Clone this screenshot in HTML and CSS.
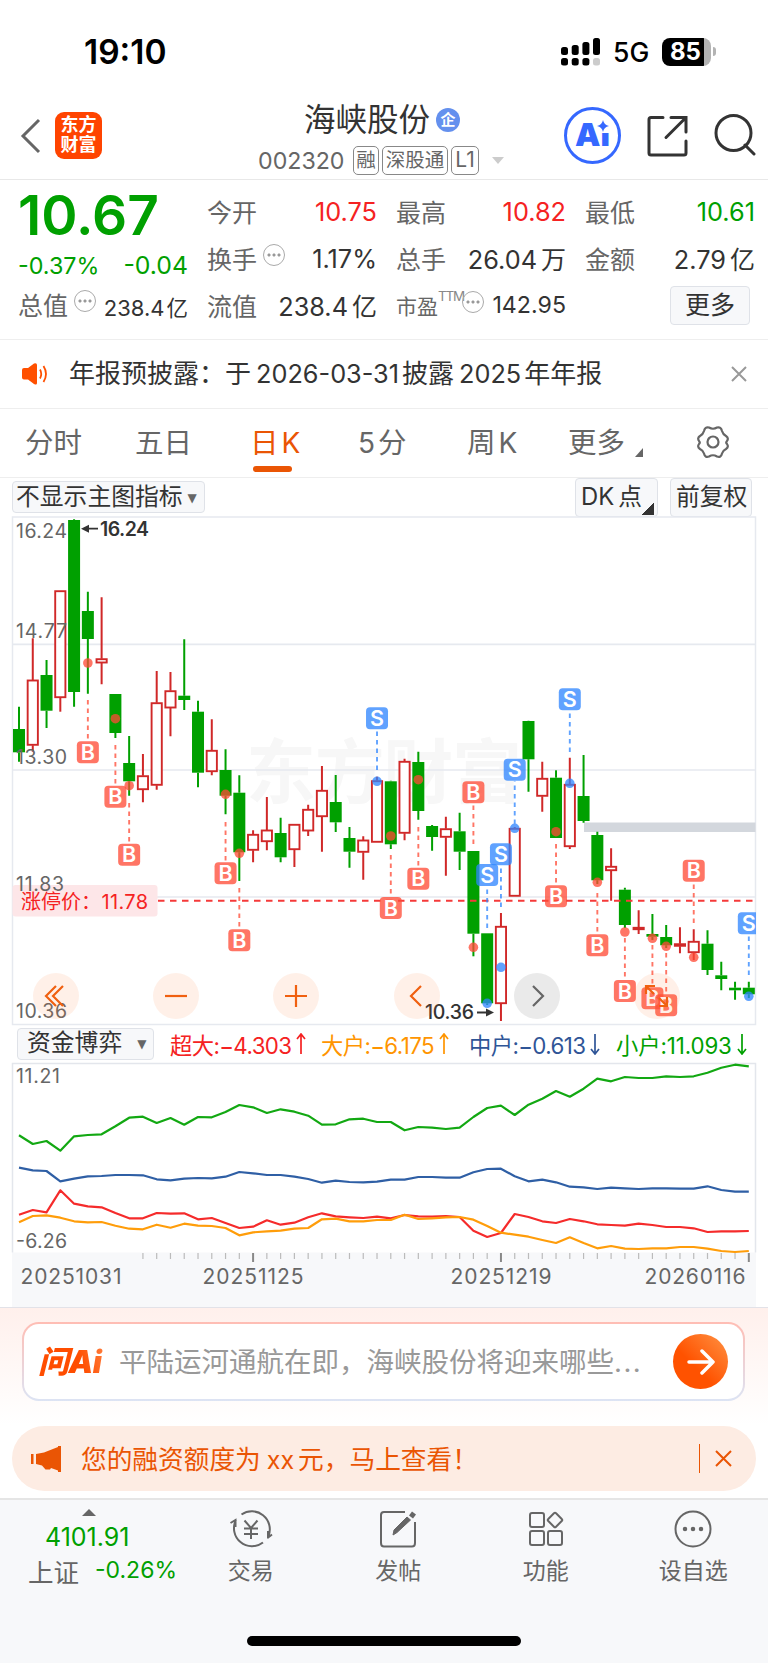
FILE: index.html
```html
<!DOCTYPE html>
<html lang="zh-CN">
<head>
    <meta charset="UTF-8">
    <title>海峡股份 002320</title>
    <link rel="stylesheet" href="styles.css">
</head>
<body>
    <div class="status-bar">
        <span class="time">19:10</span>
        <svg class="signal" width="40" height="28" viewBox="0 0 40 28">
            <rect x="0" y="9" width="7" height="8" rx="2.5"/>
            <rect x="10.7" y="7" width="7" height="10" rx="2.5"/>
            <rect x="21.4" y="4" width="7" height="13" rx="2.5"/>
            <rect x="32" y="0" width="7" height="17" rx="2.5"/>
            <rect x="0" y="20" width="7" height="7.5" rx="2.5"/>
            <rect x="10.7" y="20" width="7" height="7.5" rx="2.5"/>
            <rect x="21.4" y="20" width="7" height="7.5" rx="2.5"/>
            <rect x="32" y="20" width="7" height="7.5" rx="2.5" fill="#ccc"/>
        </svg>
        <span class="network">5G</span>
        <span class="battery">85</span>
        <span class="battery-tip"></span>
    </div>

    <header class="header">
        <svg class="back" width="22" height="36" viewBox="0 0 22 36"><path d="M19 2 L3 18 L19 34"/></svg>
        <div class="logo">东方<br>财富</div>
        <div class="stock">
            <div class="stock-name">海峡股份<span class="badge">企</span></div>
            <div class="stock-code">
                <span class="code">002320</span>
                <span class="tag">融</span>
                <span class="tag tag-wide">深股通</span>
                <span class="tag tag-level">L1</span>
                <span class="arrow-down"></span>
            </div>
        </div>
        <div class="ai-icon">Ai<svg width="14" height="14" viewBox="0 0 14 14"><path d="M7 1 Q8 6 13 7 Q8 8 7 13 Q6 8 1 7 Q6 6 7 1Z"/></svg></div>
        <svg class="share" width="42" height="42" viewBox="0 0 42 42">
            <path d="M16 2.500 H4 Q2 2.500 2 4.500 V38 Q2 40 4 40 H37 Q39 40 39 38 V26 M24 2.500 H39 V17 M38 3.500 L19 22.500"/>
        </svg>
        <svg class="search" width="42" height="42" viewBox="0 0 42 42"><circle cx="19.500" cy="19" r="17.500"/><path d="M31 31 L40 40"/></svg>
    </header>

    <section class="quote">
        <div class="price-col">
            <div class="price">10.67</div>
            <div class="change"><span>-0.37%</span><span class="diff">-0.04</span></div>
            <div class="cell small"><label>总值</label><i class="tip"></i><b>238.4<em>亿</em></b></div>
        </div>
        <div class="quote-grid">
            <div class="cell"><label>今开</label><b class="red">10.75</b></div>
            <div class="cell"><label>最高</label><b class="red">10.82</b></div>
            <div class="cell"><label>最低</label><b class="green">10.61</b></div>
            <div class="cell"><label>换手</label><i class="tip"></i><b>1.17%</b></div>
            <div class="cell"><label>总手</label><b>26.04<em>万</em></b></div>
            <div class="cell"><label>金额</label><b>2.79<em>亿</em></b></div>
            <div class="cell"><label>流值</label><b>238.4<em>亿</em></b></div>
            <div class="cell pe"><label>市盈</label><sup>TTM</sup><i class="tip"></i><b>142.95</b></div>
            <div class="cell"><button class="more-btn">更多</button></div>
        </div>
    </section>

    <div class="notice">
        <svg width="26" height="22" viewBox="0 0 26 22">
            <path d="M0 7 Q0 5 2 5 H6 L12 .5 Q15 -.5 15 2 V20 Q15 22.500 12 21 L6 16.500 H2 Q0 16.500 0 14.500Z" fill="#ff5000"/>
            <path d="M18 6.500 Q20.500 11 18 15.500 M21.500 3 Q26.500 11 21.500 19" fill="none" stroke="#ff5000" stroke-width="1.800"/>
        </svg>
        <span class="notice-text">年报预披露：于<u>2026-03-31</u>披露<u>2025</u>年年报</span>
        <svg class="close" width="16" height="16" viewBox="0 0 16 16"><path d="M1 1 L15 15 M15 1 L1 15"/></svg>
    </div>

    <nav class="tabs">
        <span class="tab">分时</span>
        <span class="tab">五日</span>
        <span class="tab active">日<u>K</u></span>
        <span class="tab"><u>5</u>分</span>
        <span class="tab">周<u>K</u></span>
        <span class="tab tab-more">更多</span>
        <svg class="gear" width="34" height="34" viewBox="0 0 34 34">
            <path d="M13 2.500 Q17 5 21 2.500 Q25 1.500 26 6 Q27 9.500 30 11 Q33 13 31 16 Q29.500 17.500 31 19 Q33 22 30 24 Q27 25.500 26 28.500 Q25 33 21 31.500 Q17 29 13 31.500 Q9 33 8 28.500 Q7 25.500 4 24 Q1 22 3 19 Q4.500 17.500 3 16 Q1 13 4 11 Q7 9.500 8 6 Q9 1.500 13 2.500Z"/>
            <circle cx="17" cy="17" r="5.500"/>
        </svg>
    </nav>

    <div class="chart-options">
        <button class="option option-main">不显示主图指标<small>▼</small></button>
        <button class="option option-dk">DK<em>点</em></button>
        <button class="option option-fq">前复权</button>
    </div>

    <div class="k-chart">
        <!-- Le graphique K est dessiné par script.js -->
        <svg id="k-svg" width="768" height="510" viewBox="0 516 768 510"></svg>
        <div class="chart-controls">
            <span class="ctrl"><svg viewBox="0 0 46 46"><path d="M23 13 L13 23 L23 33 M30 13 L20 23 L30 33"/></svg></span>
            <span class="ctrl"><svg viewBox="0 0 46 46"><path d="M12 23 H34"/></svg></span>
            <span class="ctrl"><svg viewBox="0 0 46 46"><path d="M12 23 H34 M23 12 V34"/></svg></span>
            <span class="ctrl"><svg viewBox="0 0 46 46"><path d="M27 13 L17 23 L27 33"/></svg></span>
            <span class="ctrl ctrl-gray"><svg viewBox="0 0 46 46"><path d="M19 13 L29 23 L19 33"/></svg></span>
            <span class="ctrl"><svg viewBox="0 0 46 46"><path d="M20 21 L12 13 M12 21 V13 H21 M25 25 L33 33 M33 24 V33 H25"/></svg></span>
        </div>
    </div>

    <div class="fund-bar">
        <button class="option option-fund">资金博弈<small>▼</small></button>
        <span class="fund red">超大:−4.303<svg viewBox="0 0 10 22"><path d="M5 1V21M1 6L5 1L9 6"/></svg></span>
        <span class="fund orange">大户:−6.175<svg viewBox="0 0 10 22"><path d="M5 1V21M1 6L5 1L9 6"/></svg></span>
        <span class="fund blue">中户:−0.613<svg viewBox="0 0 10 22"><path d="M5 1V21M1 16L5 21L9 16"/></svg></span>
        <span class="fund green">小户:11.093<svg viewBox="0 0 10 22"><path d="M5 1V21M1 16L5 21L9 16"/></svg></span>
    </div>

    <svg id="fund-svg" width="768" height="245" viewBox="0 1062 768 245"></svg>

    <section class="ask">
        <div class="ask-box">
            <span class="ask-logo">问Ai</span>
            <span class="ask-text">平陆运河通航在即，海峡股份将迎来哪些<u>...</u></span>
            <span class="ask-go"><svg width="28" height="26" viewBox="0 0 28 26"><path d="M2 13 H26 M15 2 L26 13 L15 24"/></svg></span>
        </div>
    </section>

    <div class="promo">
        <svg width="31" height="28" viewBox="0 0 31 28"><path d="M0 9 H2.500 V19 H0Z M5 9 L13 7.500 L27 2 V1 H30 V27 H27 V25.500 L20 23 L19 24.500 H14.500 L11 20.500 L5 19Z" fill="#ea5504"/></svg>
        <span class="promo-text">您的融资额度为<u>xx</u>元，马上查看！</span>
        <span class="promo-line"></span>
        <svg class="close" width="17" height="17" viewBox="0 0 17 17"><path d="M1 1 L16 16 M16 1 L1 16"/></svg>
    </div>

    <footer class="bottom-nav">
        <div class="index">
            <span class="arrow-up"></span>
            <div class="index-value">4101.91</div>
            <div class="index-row"><label>上证</label><span>-0.26%</span></div>
        </div>
        <div class="nav-item">
            <svg width="44" height="40" viewBox="0 0 44 40">
                <path d="M12.500 5.500 A18 18 0 0 1 39.500 27 M38.500 29 L43 25.500 M39 22 V29.500 M34 33.500 A18 18 0 0 1 7 11 M1.500 14 L6.500 11 V18"/>
                <path d="M15.500 11.500 L22 19 L28.500 11.500 M22 19 V30 M15 19.500 H29 M15 25 H29"/>
            </svg>
            <span>交易</span>
        </div>
        <div class="nav-item">
            <svg width="44" height="40" viewBox="0 0 44 40">
                <path d="M29 3 H8 Q5 3 5 6 V34 Q5 37.500 8 37.500 H36 Q39 37.500 39 34 V13"/>
                <path d="M35 8 L38 4" stroke-width="5"/>
                <path d="M17 26 L18 21 L31 8 L34.500 11 L21 23.500Z" fill="#666" stroke-width="1"/>
            </svg>
            <span>发帖</span>
        </div>
        <div class="nav-item">
            <svg width="44" height="40" viewBox="0 0 44 40">
                <rect x="6" y="4" width="14" height="14" rx="2"/>
                <rect x="6" y="22" width="14" height="14" rx="2"/>
                <rect x="24" y="22" width="14" height="14" rx="2"/>
                <rect x="25.500" y="5.500" width="11" height="11" rx="1.500" transform="rotate(45 31 11)"/>
            </svg>
            <span>功能</span>
        </div>
        <div class="nav-item">
            <svg width="44" height="40" viewBox="0 0 44 40">
                <circle cx="22" cy="20" r="17.500"/>
                <path d="M14 20h.01M22 20h.01M30 20h.01" stroke-width="4.500" stroke-linecap="round"/>
            </svg>
            <span>设自选</span>
        </div>
    </footer>
    <div class="home"><span></span></div>

    <script src="script.js"></script>
</body>
</html>
```
FILE: styles.css
```css
* {
    box-sizing: border-box;
}
body {
    margin: 0;
    width: 768px;
    background: #fff;
    color: #333;
    font-family: Inter, "Noto Sans CJK SC", sans-serif;
}
em, i, b {
    font-style: normal;
    font-weight: normal;
}
u {
    text-decoration: none;
}
button {
    font-family: inherit;
    color: #333;
    background: #f7f8fa;
    border: 1.5px solid #dfe2e8;
    border-radius: 4px;
    padding: 0;
    white-space: nowrap;
}
.red { color: #f52222; }
.green { color: #00a000; }
.orange { color: #ff9500; }
.blue { color: #2f5597; }

/* status bar */
.status-bar {
    display: flex;
    align-items: center;
    height: 95px;
    padding: 8px 52px 0 84px;
    color: #000;
}
.time {
    font-size: 33.5px;
    font-weight: 600;
    flex: 1;
}
.network {
    font-size: 26.5px;
    font-weight: 500;
    margin: 0 14px 0 12px;
    width: 35px;
}
.battery {
    width: 49px;
    height: 28px;
    border-radius: 8px;
    background: linear-gradient(to right, #000 42px, #b3b3b3 42px);
    color: #fff;
    font-size: 24px;
    font-weight: 700;
    line-height: 28px;
    padding-left: 8px;
}
.battery-tip {
    width: 3px;
    height: 9px;
    margin-left: 2px;
    border-radius: 0 4px 4px 0;
    background: #b3b3b3;
}

/* header */
.header {
    display: flex;
    height: 85px;
    border-bottom: 1.5px solid #e8e8e8;
}
.back {
    margin: 23px 0 0 20px;
    fill: none;
    stroke: #666;
    stroke-width: 3;
}
.logo {
    width: 47px;
    height: 47px;
    margin: 17px 0 0 13px;
    padding-top: 3px;
    border-radius: 9px;
    background: #ff4400;
    color: #fff;
    font-size: 18px;
    font-weight: 700;
    line-height: 20px;
    text-align: center;
}
.stock {
    margin-left: 156px;
    width: 260px;
}
.stock-name {
    display: flex;
    align-items: center;
    margin: 7px 0 0 46px;
    font-size: 31.5px;
    line-height: 34px;
    height: 36px;
}
.badge {
    width: 24px;
    height: 24px;
    margin-left: 6px;
    border-radius: 50%;
    background: #6490ee;
    color: #fff;
    font-size: 15px;
    font-weight: 700;
    line-height: 23px;
    text-align: center;
}
.stock-code {
    display: flex;
    align-items: center;
    margin-top: 8px;
    height: 29px;
    color: #666;
}
.code {
    width: 87px;
    margin-right: 8px;
    font-size: 23.2px;
}
.tag {
    width: 26px;
    height: 29px;
    margin-right: 3px;
    border: 1.5px solid #888;
    border-radius: 5px;
    font-size: 19.5px;
    line-height: 26px;
    text-align: center;
}
.tag-wide {
    width: 66px;
}
.tag-level {
    width: 28px;
    font-size: 21px;
}
.arrow-down {
    margin-left: 10px;
    border: 6.5px solid transparent;
    border-top: 7px solid #ccc;
    border-bottom: 0;
}
.ai-icon {
    position: relative;
    width: 57px;
    height: 57px;
    margin: 12px 0 0 46px;
    border: 3px solid #3568ff;
    border-radius: 50%;
    color: #3568ff;
    font-size: 32px;
    font-weight: 900;
    line-height: 50px;
    text-align: center;
}
.ai-icon svg {
    position: absolute;
    right: 8px;
    top: 9px;
    fill: #3568ff;
    background: #fff;
}
.share, .search {
    margin: 20px 0 0 26px;
    fill: none;
    stroke: #333;
    stroke-width: 3;
    stroke-linecap: round;
}
.search {
    margin: 19px 0 0 25px;
}

/* quote */
.quote {
    display: flex;
    height: 160px;
    padding: 9px 12px 0 18px;
    border-bottom: 1.5px solid #eee;
}
.price-col {
    width: 170px;
}
.price {
    height: 53px;
    color: #00a000;
    font-size: 55px;
    font-weight: 600;
    line-height: 53px;
}
.change {
    display: flex;
    justify-content: space-between;
    height: 40px;
    line-height: 47px;
    color: #00a000;
    font-size: 23.3px;
}
.diff {
    font-size: 24.8px;
}
.quote-grid {
    display: grid;
    grid-template-columns: repeat(3, 170px);
    grid-auto-rows: 47px;
    column-gap: 19px;
    margin-left: 19px;
}
.cell {
    display: flex;
    align-items: center;
    height: 44px;
    white-space: nowrap;
}
.cell label {
    color: #666;
    font-size: 25px;
}
.cell b {
    margin-left: auto;
    font-size: 25.3px;
}
.cell em {
    margin-left: 4px;
    font-size: 25px;
}
.small b {
    font-size: 22px;
    padding-top: 4px;
}
.small em {
    margin-left: 2px;
    font-size: 21.5px;
}
.tip {
    width: 22px;
    height: 22px;
    margin: 0 0 7px 6px;
    flex-shrink: 0;
    border: 1.7px solid #aaa;
    border-radius: 50%;
    background:
        radial-gradient(circle, #999 1.3px, transparent 1.8px) -5px 0 no-repeat,
        radial-gradient(circle, #999 1.3px, transparent 1.8px) 0 0 no-repeat,
        radial-gradient(circle, #999 1.3px, transparent 1.8px) 5px 0 no-repeat;
}
.pe label {
    font-size: 21px;
}
.pe sup {
    font-size: 13.5px;
    width: 24px;
    letter-spacing: -1.2px;
    color: #888;
    height: 34px;
}
.pe .tip {
    margin-left: 0;
}
.pe b {
    font-size: 23.2px;
}
.more-btn {
    width: 80px;
    height: 39px;
    margin-left: auto;
    margin-right: 5px;
    font-size: 25px;
    line-height: 34px;
}

/* notice */
.notice {
    display: flex;
    align-items: center;
    height: 69px;
    padding: 0 21px 0 22px;
    border-bottom: 1.5px solid #eee;
}
.notice-text {
    flex: 1;
    margin: -5px 0 0 21px;
    font-size: 26px;
}
.notice-text u {
    margin: 0 3px 0 5px;
    font-size: 25.3px;
}
.close {
    fill: none;
    stroke: #999;
    stroke-width: 2;
}

/* tabs */
.tabs {
    display: flex;
    align-items: center;
    height: 69px;
    padding-left: 25px;
    border-bottom: 1.5px solid #eee;
    color: #666;
    font-size: 28.5px;
}
.tab {
    position: relative;
    width: 57px;
    margin-top: -6px;
    margin-right: 53px;
    white-space: nowrap;
}
.tab:nth-child(3) { margin-left: 5px; }
.tab:nth-child(4) { margin-left: -5px; }
.tab:nth-child(5) { margin-left: 2px; }
.tab:nth-child(6) { margin-left: -9px; }
.tab u {
    font-size: 28px;
    margin: 0 3px;
}
.active {
    color: #ea5504;
}
.active::after {
    content: "";
    position: absolute;
    left: 3px;
    bottom: -11px;
    width: 39px;
    height: 6px;
    border-radius: 3px;
    background: #ea5504;
}
.tab-more::after {
    content: "";
    position: absolute;
    left: 67px;
    bottom: 4px;
    border-left: 8px solid transparent;
    border-bottom: 9px solid #666;
}
.gear {
    margin: -2px 0 0 18px;
    fill: none;
    stroke: #666;
    stroke-width: 2.2;
}

/* chart */
.chart-options {
    display: flex;
    align-items: center;
    height: 38px;
    padding: 0 16px 0 12px;
}
.option {
    height: 32px;
    flex-shrink: 0;
    font-size: 23.8px;
    line-height: 28px;
    text-align: left;
}
.option small {
    font-family: "DejaVu Sans", sans-serif;
    font-size: 12px;
    color: #666;
    vertical-align: 3px;
    margin-left: 5px;
}
.option-main {
    width: 193px;
    padding-left: 3px;
    margin-right: auto;
}
.option-dk, .option-fq {
    height: 39px;
    padding-left: 5px;
}
.option-dk {
    width: 83px;
    margin-right: 12px;
    background: linear-gradient(135deg, transparent 50%, #333 50%) 66px 24px / 12px 12px no-repeat #f7f8fa;
}
.option-dk em {
    margin-left: 4px;
}
.option-fq {
    width: 82px;
}
.k-chart {
    position: relative;
    height: 510px;
}
.k-chart svg, #fund-svg {
    display: block;
}
.chart-controls {
    position: absolute;
    left: 33px;
    bottom: 7px;
    width: 647px;
    display: flex;
    justify-content: space-between;
}
.ctrl {
    width: 46px;
    height: 46px;
    border-radius: 50%;
    background: rgba(255, 120, 50, .11);
}
.ctrl svg {
    fill: none;
    stroke: #f06010;
    stroke-width: 2.2;
}
.ctrl-gray {
    background: #eaeaea;
}
.ctrl-gray svg {
    stroke: #666;
}

/* funds */
.fund-bar {
    display: flex;
    align-items: center;
    height: 36px;
    padding: 0 12px 1px 17px;
}
.option-fund {
    width: 137px;
    margin-right: 16px;
    padding-left: 9px;
}
.option-fund small {
    margin-left: 15px;
}
.fund {
    display: flex;
    align-items: center;
    width: 151px;
    flex-shrink: 0;
    white-space: nowrap;
    font-size: 22.3px;
    letter-spacing: -.6px;
}
.fund.orange {
    width: 148px;
}
.fund.blue {
    width: 147px;
}
.fund.green {
    width: 132px;
    letter-spacing: -.1px;
}
.fund svg {
    width: 10px;
    height: 22px;
    margin-left: 5px;
    fill: none;
    stroke: currentColor;
    stroke-width: 1.7;
}

/* ask */
.ask {
    height: 118px;
    padding: 14px 23px 0 22px;
    border-top: 1.5px solid #e2e2e8;
    background: linear-gradient(#fff0ec, #fff);
}
.ask-box {
    display: flex;
    align-items: center;
    height: 79px;
    padding: 0 15px 0 14px;
    border: 2px solid transparent;
    border-radius: 17px;
    background: linear-gradient(#fff, #fff) padding-box, linear-gradient(#ffbdb4, #dce4f4) border-box;
}
.ask-logo {
    width: 81px;
    margin-top: -4px;
    font-size: 31px;
    font-weight: 900;
    font-style: italic;
    letter-spacing: -.5px;
    background: linear-gradient(70deg, #ff4d00 50%, #ff9a60);
    -webkit-background-clip: text;
    color: transparent;
}
.ask-text {
    flex: 1;
    margin-top: -3px;
    color: #999;
    font-size: 27.5px;
    white-space: nowrap;
}
.ask-text u {
    letter-spacing: 1.5px;
}
.ask-go {
    display: flex;
    align-items: center;
    justify-content: center;
    width: 55px;
    height: 55px;
    border-radius: 50%;
    background: linear-gradient(45deg, #ff5200 40%, #ff9344);
}
.ask-go svg {
    fill: none;
    stroke: #fff;
    stroke-width: 3.5;
    stroke-linecap: round;
    stroke-linejoin: round;
}
.promo {
    display: flex;
    align-items: center;
    height: 65px;
    margin: 1px 12px 7px;
    padding: 0 24px 0 19px;
    border-radius: 33px;
    background: #fdece3;
    color: #ea5504;
}
.promo-text {
    flex: 1;
    margin: -3px 0 0 19px;
    font-size: 25.7px;
}
.promo-text u {
    margin: 0 4px 0 6px;
    font-size: 25px;
}
.promo-line {
    width: 1.5px;
    height: 29px;
    margin-right: 15px;
    background: #ea5504;
}
.promo .close {
    stroke: #ea5504;
}

/* bottom */
.bottom-nav {
    display: flex;
    height: 112px;
    padding-top: 9px;
    border-top: 2px solid #e5e5e5;
    background: #f7f8fa;
    color: #666;
}
.index {
    width: 177px;
}
.arrow-up {
    display: block;
    width: 14px;
    margin-left: 82px;
    border: 7px solid transparent;
    border-bottom: 7px solid #666;
    border-top: 0;
}
.index-value {
    margin: 6px 0 0 45px;
    color: #00a000;
    font-size: 25px;
    line-height: 30px;
}
.index-row {
    display: flex;
    justify-content: space-between;
    align-items: center;
    margin-left: 28px;
    height: 36px;
    font-size: 25.5px;
}
.index-row span {
    color: #00a000;
    font-size: 23px;
}
.nav-item {
    width: 147.5px;
    display: flex;
    flex-direction: column;
    align-items: center;
    font-size: 23px;
}
.nav-item svg {
    margin-bottom: 6px;
    fill: none;
    stroke: #666;
    stroke-width: 2;
}
.nav-item span {
    line-height: 32px;
}
.home {
    height: 55px;
    padding-top: 26px;
    background: #f7f8fa;
}
.home span {
    display: block;
    width: 274px;
    height: 10px;
    margin: 0 auto;
    border-radius: 5px;
    background: #000;
}
```
FILE: script.js
```js
const X0 = 19;
const STEP = 13.77;
const x = i => X0 + STEP * i;

// [couleur, haut, ouverture/clôture haute, basse, bas]
const candles = [
    ['g', 706.7, 729, 752.3, 761.7], ['r', 638.3, 680, 745.3, 751.7], ['g', 660, 675, 710.7, 728],
    ['r', 590.7, 590.7, 697.7, 711.7], ['g', 519.3, 520, 692, 706.7], ['g', 591.7, 611, 639, 693.7],
    ['r', 597.3, 658.7, 663, 684.3], ['g', 694, 694, 733, 738], ['g', 736, 763, 781.3, 795.7],
    ['r', 754, 775.7, 789.7, 802.3], ['r', 671, 702.7, 785.3, 789.7], ['r', 672, 690.7, 708, 736.3],
    ['g', 639.3, 695.7, 700, 710], ['g', 700.7, 711.7, 772.7, 787.3], ['r', 719.3, 750.3, 771.7, 775.3],
    ['g', 749.3, 770, 795.7, 814.3], ['g', 775.3, 792.7, 852.3, 881], ['r', 830.3, 834.3, 850.3, 862.3],
    ['r', 797, 830, 841.7, 850.3], ['g', 817.7, 833, 857.3, 862.3], ['r', 824.3, 824.3, 849.7, 867],
    ['r', 804.7, 809.3, 831, 836], ['r', 766, 790.3, 816.7, 851.7], ['g', 775, 802, 822.3, 832],
    ['g', 827, 838, 851.7, 867.7], ['r', 836.3, 840, 852.3, 879.7], ['r', 776.7, 780.7, 842.3, 842.3],
    ['g', 780.7, 781.3, 844.3, 849], ['r', 758.7, 761.3, 833.3, 840.3], ['g', 751.7, 762, 811, 819.7],
    ['g', 825, 826, 837, 850.7], ['r', 816.7, 828.7, 837.3, 875.7], ['g', 812.7, 831.3, 851.7, 870],
    ['g', 851, 851, 933.7, 956.3], ['g', 933.3, 933.3, 1003.3, 1005], ['r', 913, 926.3, 1003.7, 1021],
    ['r', 827, 828.3, 896.3, 896.3], ['g', 720.7, 721, 759.3, 791.7], ['r', 761.7, 778.3, 796.3, 811.7],
    ['g', 770.3, 777.7, 838, 838], ['r', 757.7, 784.3, 846.7, 849], ['g', 755, 796, 821, 822.7],
    ['g', 831.7, 835, 880.3, 884], ['r', 848.3, 866.3, 870.7, 900.7], ['g', 887.7, 889.7, 925, 928],
    ['r', 910.3, 927.3, 929.7, 934], ['g', 914, 934, 936.7, 940], ['g', 925, 937, 945.3, 948],
    ['r', 927.3, 943.7, 946.3, 953.3], ['r', 929.3, 941.3, 952.7, 960], ['g', 930.3, 943.7, 970, 975],
    ['g', 961.7, 975.3, 979, 990.3], ['g', 981.7, 987.7, 990.3, 999.7], ['g', 981.7, 987.7, 994.3, 998]
];

// [index, type, point, étiquette, extrémité de la ligne]
const marks = [
    [5, 'B', 663, 752.3, 700], [7, 'B', 718.7, 796.7, 745], [8, 'B', 785.7, 854.7, 803],
    [15, 'B', 794.3, 873.3, 822], [16, 'B', 853.3, 940.3, 888], [26, 'S', 781.3, 718.3, 770],
    [27, 'B', 836, 908, 855], [29, 'B', 779.7, 878.7, 827], [33, 'B', 947.3, 792.3, 844],
    [35, 'S', 967.3, 854.3, 907], [34, 'S', 1003.3, 875, 928], [36, 'S', 828.3, 769.7, 824],
    [39, 'B', 831.7, 896.3, 844], [40, 'S', 783.3, 699.3, 752], [42, 'B', 882.3, 945.3, 893],
    [44, 'B', 932, 991, 938], [46, 'B', 938.3, 998.3, 945], [47, 'B', 946.3, 1005.3, 953],
    [49, 'B', 957.3, 870.7, 923], [53, 'S', 996.3, 923.3, 975]
];

function text(str, tx, ty, len, size, color, weight = 400, anchor = 'start') {
    return `<text x="${tx}" y="${ty}" font-size="${size}" fill="${color}" font-weight="${weight}" text-anchor="${anchor}"${len ? ` textLength="${len}"` : ''}>${str}</text>`;
}

// Chandeliers
function drawCandle([c, high, top, bottom, low], i) {
    const cx = x(i);
    const color = c === 'g' ? '#00a000' : '#d02828';
    let s = `<path d="M${cx} ${high}V${top}M${cx} ${bottom}V${low}" stroke="${color}" stroke-width="2"/>`;
    if (c === 'g') {
        s += `<rect x="${cx - 6}" y="${top}" width="12" height="${bottom - top}" fill="${color}"/>`;
    } else {
        s += `<rect x="${cx - 5.1}" y="${top + .5}" width="10.2" height="${Math.max(bottom - top - 1, 1)}" fill="#fff" stroke="${color}" stroke-width="1.9"/>`;
    }
    return s;
}

// Points d'achat et de vente
function drawMark([i, type, dot, label, end]) {
    const cx = x(i);
    const color = type === 'B' ? '#ff4a35' : '#2f86ff';
    const start = label < end ? label + 11 : label - 11;
    return `<g opacity=".76">
        <path d="M${cx} ${end}V${start}" stroke="${color}" stroke-width="1.9" stroke-dasharray="4.5 4"/>
        <circle cx="${cx}" cy="${dot}" r="4.8" fill="${color}"/>
        <rect x="${cx - 11}" y="${label - 11}" width="22" height="22" rx="4" fill="${color}"/>
        </g>` + text(type, cx, label + 7.7, 0, 21.5, '#fff', 600, 'middle');
}

function drawKChart() {
    const grid = '#e6e9ef';
    let s = `<clipPath id="box"><rect x="12" y="516" width="744" height="509"/></clipPath>
        <rect x="12.5" y="517" width="743" height="507.5" fill="#fff" stroke="${grid}" stroke-width="1.5"/>`;
    s += text('东方财富', 246, 798, 276, 70, '#f7f7f7', 700);
    s += `<path d="M13 644.3H755M13 770H755M13 897H755" stroke="${grid}" stroke-width="1.7"/>`;
    s += '<rect x="12.5" y="885" width="145" height="31.5" rx="3" fill="#fde6e8"/>';
    s += text('涨停价：', 21, 908.5, 0, 20, '#f52222') + text('11.78', 101.5, 908.5, 46.5, 20, '#f52222');
    s += '<rect x="584" y="822.5" width="171.5" height="9.5" fill="#d3d7dd"/>';
    s += '<g clip-path="url(#box)">' + candles.map(drawCandle).join('');
    s += '<path d="M158 900.7H755" stroke="#f53a3a" stroke-width="2" stroke-dasharray="6.5 5.5"/>';
    s += marks.map(drawMark).join('') + '</g>';
    ['16.24', '14.77', '13.30', '11.83', '10.36'].forEach((v, i) => {
        s += text(v, 16, [537.5, 637.5, 763.7, 891, 1017.5][i], i === 3 ? 48 : 51, 19.5, '#666');
    });
    s += text('16.24', 100, 535.7, 49, 19.5, '#333', 600);
    s += text('10.36', 425, 1019.3, 49, 19.5, '#333', 500);
    s += `<path d="M84 528.7H98M477 1012.5H491" stroke="#333" stroke-width="1.8"/>
        <path d="M81 528.7l8 -4v8ZM494 1012.5l-8 -4v8Z" fill="#333"/>`;
    document.getElementById('k-svg').innerHTML = s;
}

// Flux de capitaux
const funds = {
    '#2f5fa5': [443,451,453,484,476,469,468,465,465,466,478,481,476,474,475,470,456,460,465,465,470,477,488,482,486,487,485,479,479,471,471,473,473,457,447,446,469,484,479,487,500,502,507,503,505,507,505,505,506,506,499,510,515,515],
    '#f52b2b': [584,570,577,511,551,559,562,579,595,595,579,581,580,598,594,609,624,620,601,614,608,592,580,589,592,594,590,595,585,589,590,588,591,632,651,639,582,591,604,609,597,604,613,615,617,611,615,621,621,625,636,634,634,633],
    '#ff9d0a': [607,588,586,593,604,607,606,617,626,628,614,623,611,617,618,624,646,637,634,632,626,624,598,596,604,604,600,600,584,597,595,592,591,599,618,638,644,650,660,669,652,669,685,678,686,687,685,685,681,681,686,693,696,693],
    '#12a812': [346,372,363,392,349,345,343,319,293,290,309,294,314,291,292,276,255,262,279,268,275,287,314,313,298,296,306,306,331,321,323,327,323,291,264,257,285,254,236,213,230,206,176,184,171,174,174,169,171,169,158,143,134,139]
};

function drawFunds() {
    let s = `<rect x="12" y="1252.5" width="744" height="56" fill="#f7f8fa"/>
        <path d="M12.5 1252.5V1063.5H755.5V1252.5" fill="none" stroke="#e3e6ec" stroke-width="1.5"/>`;
    for (const color in funds) {
        const pts = funds[color].map((v, i) => `${x(i).toFixed(1)},${(1020 + v / 3).toFixed(1)}`).join(' ');
        s += `<polyline points="${pts}" fill="none" stroke="${color}" stroke-width="2.2" stroke-linejoin="round"/>`;
    }
    for (let i = 9; i <= 53; i++) {
        const major = i === 17 || i === 35 || i === 53;
        s += `<path d="M${x(i)} 1253V${major ? 1262 : 1259}" stroke="${major ? '#888' : '#bbb'}" stroke-width="${major ? 2 : 1.2}"/>`;
    }
    s += text('11.21', 16, 1083, 44, 19.5, '#666') + text('-6.26', 16, 1248, 51, 19.5, '#666');
    ['20251031', '20251125', '20251219', '20260116'].forEach((d, i) => {
        s += text(d, [20.5, 202.5, 450.5, 644.5][i], 1283.5, 101, 21, '#666');
    });
    document.getElementById('fund-svg').innerHTML = s;
}

drawKChart();
drawFunds();
```
